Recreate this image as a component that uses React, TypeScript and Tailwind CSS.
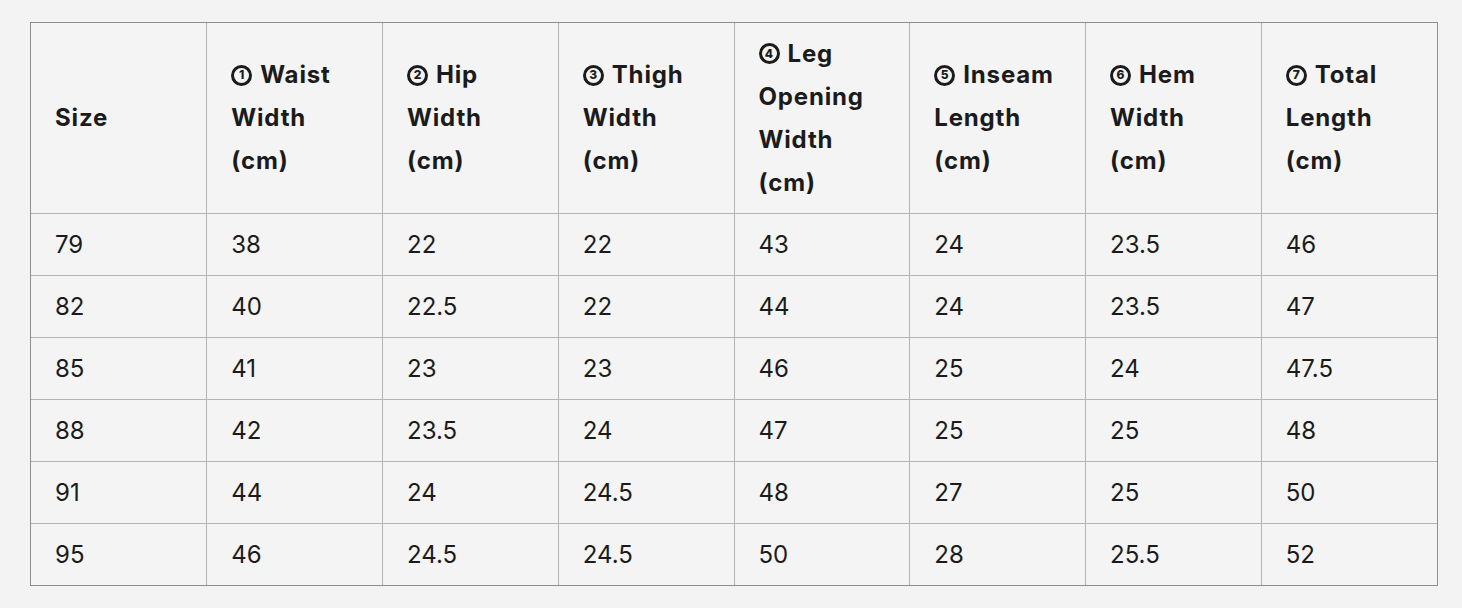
const headers: { n?: string; lines: string[] }[] = [
  { lines: ['Size'] },
  { n: '1', lines: ['Waist', 'Width', '(cm)'] },
  { n: '2', lines: ['Hip', 'Width', '(cm)'] },
  { n: '3', lines: ['Thigh', 'Width', '(cm)'] },
  { n: '4', lines: ['Leg', 'Opening', 'Width', '(cm)'] },
  { n: '5', lines: ['Inseam', 'Length', '(cm)'] },
  { n: '6', lines: ['Hem', 'Width', '(cm)'] },
  { n: '7', lines: ['Total', 'Length', '(cm)'] },
];

const rows: string[][] = [
  ['79', '38', '22', '22', '43', '24', '23.5', '46'],
  ['82', '40', '22.5', '22', '44', '24', '23.5', '47'],
  ['85', '41', '23', '23', '46', '25', '24', '47.5'],
  ['88', '42', '23.5', '24', '47', '25', '25', '48'],
  ['91', '44', '24', '24.5', '48', '27', '25', '50'],
  ['95', '46', '24.5', '24.5', '50', '28', '25.5', '52'],
];

function Circled({ n }: { n: string }) {
  return (
    <span className="mr-[8px] mt-[1px] inline-flex h-[21px] w-[21px] shrink-0 items-center justify-center rounded-full border-[3px] border-[#1b1b1b] text-[12px] font-extrabold leading-none tracking-normal">
      {n}
    </span>
  );
}

export default function App() {
  return (
    <div
      className="min-h-[608px] w-full bg-[#f3f3f3] pl-[30px] pt-[22px] text-[#1b1b1b]"
      style={{ fontFamily: 'Inter, "Noto Sans", "DejaVu Sans", sans-serif' }}
    >
      <div className="w-[1408px] border border-[#8e8e8e] bg-[#f4f4f4]">
        <table className="w-full table-fixed border-collapse">
          <thead>
            <tr className="h-[190px]">
              {headers.map((h, i) => (
                <th
                  key={i}
                  className={`border-b border-[#b4b4b4] px-6 py-2 text-left align-middle text-[24px] font-bold leading-[43px] tracking-[0.035em] ${
                    i < headers.length - 1 ? 'border-r' : ''
                  }`}
                >
                  {h.lines.map((l, j) => (
                    <div key={j} className="flex items-center whitespace-nowrap">
                      {j === 0 && h.n && <Circled n={h.n} />}
                      {l}
                    </div>
                  ))}
                </th>
              ))}
            </tr>
          </thead>
          <tbody>
            {rows.map((r, ri) => (
              <tr key={ri} className="h-[62px]">
                {r.map((c, ci) => (
                  <td
                    key={ci}
                    className={`border-[#b4b4b4] px-6 text-[24px] leading-[43px] ${
                      ci < r.length - 1 ? 'border-r' : ''
                    } ${ri < rows.length - 1 ? 'border-b' : ''}`}
                  >
                    {c}
                  </td>
                ))}
              </tr>
            ))}
          </tbody>
        </table>
      </div>
    </div>
  );
}
